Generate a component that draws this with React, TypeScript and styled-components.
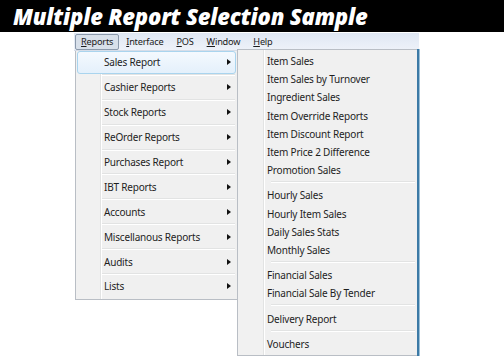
import React from "react";
import styled, { createGlobalStyle } from "styled-components";

const GlobalStyle = createGlobalStyle`
  body {
    margin: 0;
    background: #fff;
    font-family: "Noto Sans", "Liberation Sans", sans-serif;
  }
`;

const TitleBar = styled.div`
  height: 32px;
  background: #000;
  display: flex;
  align-items: center;
  padding-left: 13px;
  color: #fff;
  font-family: "Open Sans", "Liberation Sans", sans-serif;
  font-style: italic;
  font-weight: 800;
  font-size: 22px;
  letter-spacing: -0.2px;
`;

const MenuArea = styled.div`
  padding-left: 75px;
  padding-top: 1px;
`;

const MenuBar = styled.div`
  width: 344px;
  height: 17px;
  margin-left: -1px;
  display: flex;
  align-items: center;
  padding-left: 1px;
  background: linear-gradient(#dfe7f3, #eef2f9);
  border-bottom: 1px solid #d6dde8;
  font-size: 9.2px;
  letter-spacing: -0.2px;
  color: #1b1b1b;
`;

const BarItem = styled.div<{ $active?: boolean }>`
  height: 14px;
  display: flex;
  align-items: center;
  padding: 0 5px;
  margin-right: 1px;
  border: 1px solid ${(p) => (p.$active ? "#8b99ab" : "transparent")};
  background: ${(p) => (p.$active ? "#d8e0ea" : "transparent")};
  border-radius: 2px;
  u {
    text-decoration: underline;
    text-underline-offset: 1px;
  }
`;

const Dropdowns = styled.div`
  display: flex;
  align-items: flex-start;
`;

const Menu = styled.div<{ $width: number; $gutter: number }>`
  width: ${(p) => p.$width}px;
  box-sizing: border-box;
  border: 1px solid #b9bec5;
  background: linear-gradient(
    to right,
    #f1f1f1 0 ${(p) => p.$gutter}px,
    #e2e3e3 ${(p) => p.$gutter}px ${(p) => p.$gutter + 1}px,
    #ffffff ${(p) => p.$gutter + 1}px ${(p) => p.$gutter + 2}px,
    #f0f0f0 ${(p) => p.$gutter + 2}px
  );
  font-size: 10px;
  letter-spacing: -0.2px;
  color: #1e1e1e;
`;

const MainMenu = styled(Menu)`
  border-top: none;
  padding: 0 0 1px;
`;

const SubMenu = styled(Menu)`
  margin-left: -1px;
  margin-top: -2px;
  padding: 2px 0 2px;
  border-right: none;
  box-shadow: 2px 0 0 #3c7aa6, 3px 0 0 #9cc0d8;
`;

const MainRow = styled.div<{ $hot?: boolean }>`
  height: 22.9px;
  box-sizing: border-box;
  margin: 0 1px;
  display: flex;
  align-items: center;
  justify-content: space-between;
  padding: 0 4px 0 26px;
  border: 1px solid ${(p) => (p.$hot ? "#a9d4ee" : "transparent")};
  border-radius: 3px;
  background: ${(p) =>
    p.$hot ? "linear-gradient(#f4f9fe, #e4f0fb)" : "transparent"};
`;

const Sep = styled.div<{ $left: number; $top: number; $bottom: number }>`
  height: 1px;
  margin: ${(p) => p.$top}px 2px ${(p) => p.$bottom}px ${(p) => p.$left}px;
  background: #e2e3e3;
  border-bottom: 1px solid #ffffff;
`;

const Arrow = styled.span`
  width: 0;
  height: 0;
  border-top: 3.5px solid transparent;
  border-bottom: 3.5px solid transparent;
  border-left: 4px solid #111;
`;

const SubRow = styled.div`
  height: 18.2px;
  display: flex;
  align-items: center;
  padding-left: 29px;
`;

const mainItems = [
  "Sales Report",
  "Cashier Reports",
  "Stock Reports",
  "ReOrder Reports",
  "Purchases Report",
  "IBT Reports",
  "Accounts",
  "Miscellanous Reports",
  "Audits",
  "Lists",
];

const subGroups = [
  [
    "Item Sales",
    "Item Sales by Turnover",
    "Ingredient Sales",
    "Item Override Reports",
    "Item Discount Report",
    "Item Price 2 Difference",
    "Promotion Sales",
  ],
  ["Hourly Sales", "Hourly Item Sales", "Daily Sales Stats", "Monthly Sales"],
  ["Financial Sales", "Financial Sale By Tender"],
  ["Delivery Report"],
  ["Vouchers"],
];

export default function App() {
  return (
    <>
      <GlobalStyle />
      <TitleBar>Multiple Report Selection Sample</TitleBar>
      <MenuArea>
        <MenuBar>
          <BarItem $active>
            <span>
              <u>R</u>eports
            </span>
          </BarItem>
          <BarItem>
            <span>
              <u>I</u>nterface
            </span>
          </BarItem>
          <BarItem>
            <span>
              <u>P</u>OS
            </span>
          </BarItem>
          <BarItem>
            <span>
              <u>W</u>indow
            </span>
          </BarItem>
          <BarItem>
            <span>
              <u>H</u>elp
            </span>
          </BarItem>
        </MenuBar>
        <Dropdowns>
          <MainMenu $width={163} $gutter={24}>
            {mainItems.map((item, i) => (
              <React.Fragment key={item}>
                {i > 0 && <Sep $left={26} $top={0} $bottom={0} />}
                <MainRow $hot={i === 0}>
                  <span>{item}</span>
                  <Arrow />
                </MainRow>
              </React.Fragment>
            ))}
          </MainMenu>
          <SubMenu $width={180} $gutter={25}>
            {subGroups.map((group, g) => (
              <React.Fragment key={g}>
                {g > 0 && <Sep $left={33} $top={2} $bottom={3} />}
                {group.map((item) => (
                  <SubRow key={item}>{item}</SubRow>
                ))}
              </React.Fragment>
            ))}
          </SubMenu>
        </Dropdowns>
      </MenuArea>
    </>
  );
}
